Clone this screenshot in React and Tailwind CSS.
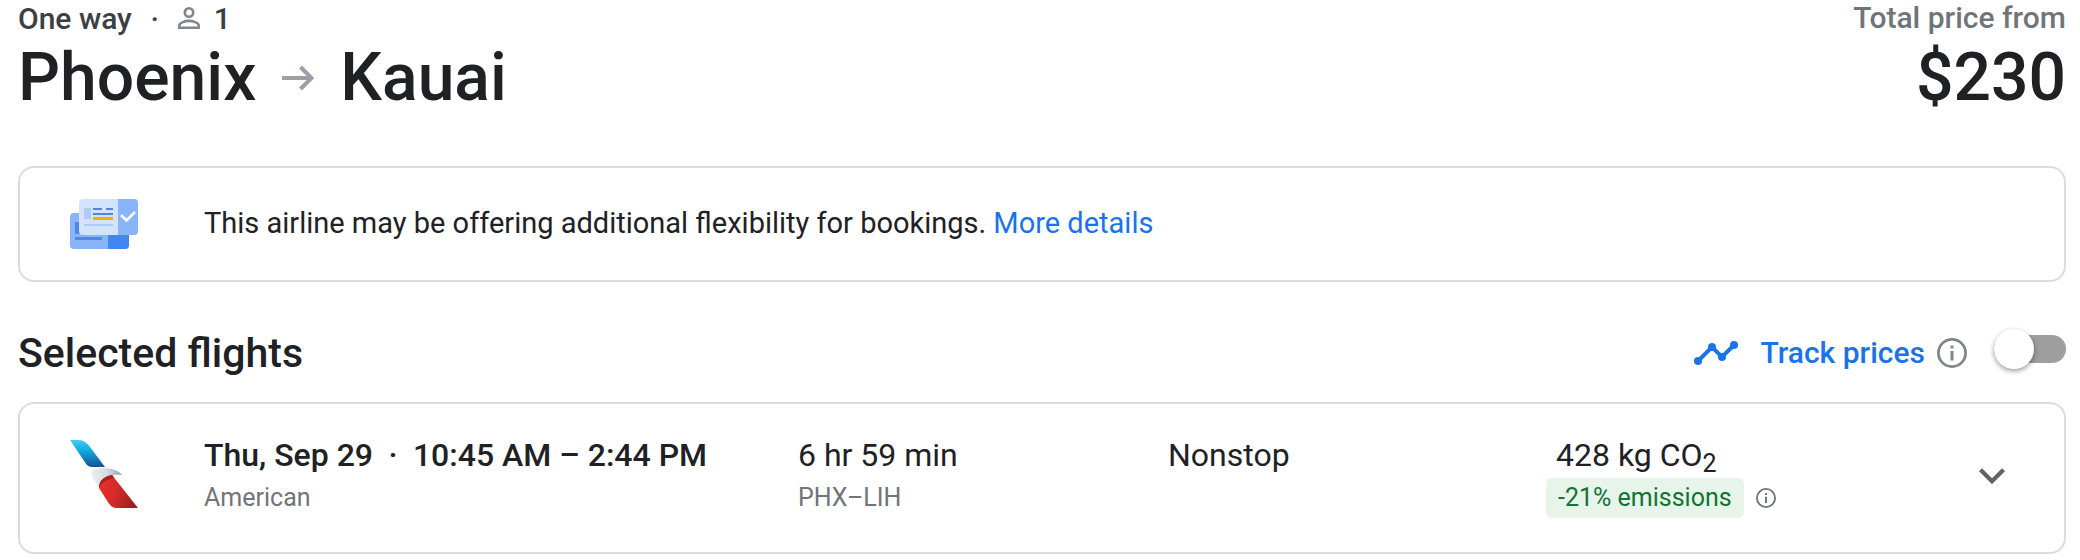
import { useState } from "react";

function PersonIcon() {
  return (
    <svg viewBox="0 0 22 22" aria-hidden="true" className="w-[22px] h-[22px]">
      <g fill="none" stroke="#80868b" strokeWidth="2.6">
        <circle cx="11" cy="5.5" r="4.2" />
        <path d="M1.3 20.7v-2.2c0-2.9 6.2-4.6 9.7-4.6s9.7 1.7 9.7 4.6v2.2z" />
      </g>
    </svg>
  );
}

function ArrowIcon() {
  return (
    <svg viewBox="0 0 32 26" aria-label="to" className="w-8 h-[26px]">
      <path
        d="M0 13h29M18.5 2l11 11-11 11"
        fill="none"
        stroke="#9aa0a6"
        strokeWidth="4"
      />
    </svg>
  );
}

function TicketsIcon() {
  return (
    <svg viewBox="0 0 68 50" aria-hidden="true" className="w-[68px] h-[50px]">
      <rect y="14" width="59" height="36" rx="4" fill="#8ab4f8" />
      <path d="M38 14h17a4 4 0 0 1 4 4v28a4 4 0 0 1-4 4H38z" fill="#4285f4" />
      <path d="M5 23h8v12H5zM5 38h27v3H5z" fill="#4f86ec" />
      <rect x="9" width="59" height="36" rx="4" fill="#d2e3fc" />
      <path d="M48 0h16a4 4 0 0 1 4 4v28a4 4 0 0 1-4 4H48z" fill="#8ab4f8" />
      <path d="M14 9h7v11h-7zM14 25h29v2H14z" fill="#aecbfa" />
      <path d="M23 9h9v2h-9zM36 9h7v2h-7zM23 14h20v2H23z" fill="#4f86ec" />
      <path d="M23 18h20v3H23z" fill="#f9ab00" />
      <path d="M51 16l5.5 5.5L65 13" fill="none" stroke="#fff" strokeWidth="2.6" />
    </svg>
  );
}

function AmericanLogo() {
  return (
    <svg viewBox="0 0 68 68" role="img" aria-label="American Airlines" className="w-[68px] h-[68px]">
      <defs>
        <linearGradient id="aa-blue" x1="0" y1="0" x2="0" y2="1">
          <stop offset="0" stopColor="#4bc9f3" />
          <stop offset="0.35" stopColor="#0fb0e4" />
          <stop offset="1" stopColor="#15518f" />
        </linearGradient>
        <linearGradient id="aa-beak" x1="0" y1="0" x2="1" y2="0">
          <stop offset="0" stopColor="#e8edf2" />
          <stop offset="0.5" stopColor="#d5dde2" />
          <stop offset="1" stopColor="#8fa3ab" />
        </linearGradient>
        <linearGradient id="aa-red" x1="0" y1="0.3" x2="1" y2="0.6">
          <stop offset="0" stopColor="#e8302a" />
          <stop offset="0.45" stopColor="#d52b29" />
          <stop offset="1" stopColor="#96201f" />
        </linearGradient>
      </defs>
      <path d="M0 0h8c5 0 8 2 10.5 5L35 27H22.5c-3.5 0-5.5-1.500-7-4z" fill="url(#aa-blue)" />
      <path
        d="M29 47L23 38c-2-3-2-8 2-9 9-2.300 22-1 27 6-5-.6-9-.4-12 1-7 2-10 6-11 11z"
        fill="url(#aa-beak)"
      />
      <path d="M42 35L68 68H47c-4 0-6.500-2-8.500-5L29 48c0-6 3-11 13-13z" fill="url(#aa-red)" />
      <path d="M42 35l2.500 3.200C36 39.500 31 43 29.200 48.300 28.500 42 33 36.500 42 35z" fill="#ac2023" />
    </svg>
  );
}

function TrendIcon() {
  return (
    <svg viewBox="0 0 44 24" aria-hidden="true" className="w-11 h-6">
      <path d="M4 20L18 6l10 10L40 4" fill="none" stroke="#1a73e8" strokeWidth="4" />
      <g fill="#1a73e8">
        <circle cx="4" cy="20" r="4" />
        <circle cx="18" cy="6" r="4" />
        <circle cx="28" cy="16" r="4" />
        <circle cx="40" cy="4" r="4" />
      </g>
    </svg>
  );
}

function InfoIcon({ className, color }) {
  return (
    <svg viewBox="0 0 30 30" aria-hidden="true" className={className}>
      <circle cx="15" cy="15" r="13.6" fill="none" stroke={color} strokeWidth="2.8" />
      <path d="M13.5 7.5h3v3h-3zM13.5 13h3v9.5h-3z" fill={color} />
    </svg>
  );
}

function TripHeader() {
  return (
    <header className="flex justify-between">
      <div>
        <div className="flex items-center h-9 text-[30px] font-medium text-[#3c4043]">
          <span>One way</span>
          <span className="w-[46px] text-center">·</span>
          <PersonIcon />
          <span className="ml-3.5">1</span>
        </div>
        <h1 className="flex items-center gap-[26px] h-[84px] text-[66px] leading-none font-medium">
          Phoenix <ArrowIcon /> Kauai
        </h1>
      </div>
      <div className="text-right font-medium">
        <p className="h-9 leading-9 text-[30px] text-[#70757a]">Total price from</p>
        <p className="flex items-center justify-end h-[84px] text-[66px] leading-none">$230</p>
      </div>
    </header>
  );
}

function Notice() {
  return (
    <section className="flex items-center h-[116px] mt-[46px] pl-[50px] border-2 border-[#dadce0] rounded-2xl text-[29px]">
      <TicketsIcon />
      <p className="ml-[66px]">
        This airline may be offering additional flexibility for bookings.{" "}
        <a href="#details" className="text-[#1a73e8]">
          More details
        </a>
      </p>
    </section>
  );
}

function TrackPrices() {
  const [tracking, setTracking] = useState(false);

  return (
    <div className="flex items-center">
      <TrendIcon />
      <label htmlFor="track-prices" className="ml-[22px] text-[30px] leading-10 font-medium text-[#1a73e8]">
        Track prices
      </label>
      <button type="button" aria-label="About price tracking" className="ml-3">
        <InfoIcon className="w-[30px] h-[30px]" color="#80868b" />
      </button>
      <span className="relative flex items-center w-[72px] h-10 ml-[27px] mb-2">
        <input
          id="track-prices"
          type="checkbox"
          role="switch"
          checked={tracking}
          onChange={(e) => setTracking(e.target.checked)}
          className="peer appearance-none w-full h-7 rounded-full bg-[#9e9e9e] checked:bg-[#8ab4f8] cursor-pointer"
        />
        <span className="absolute left-0 top-0 w-10 h-10 rounded-full bg-white shadow-[0_2px_5px_rgba(0,0,0,0.4)] pointer-events-none peer-checked:left-8 peer-checked:bg-[#1a73e8]" />
      </span>
    </div>
  );
}

function FlightCard() {
  return (
    <section className="flex items-start h-[152px] mt-5 pt-9 pl-[50px] pr-10 border-2 border-[#dadce0] rounded-2xl">
      <AmericanLogo />
      <div className="grid grid-cols-[594fr_370fr_378fr_414fr] grow ml-[66px] text-[32px] leading-[30px] whitespace-nowrap">
        <div>
          <p className="font-medium">
            Thu, Sep 29 <span className="inline-block w-6 text-center">·</span> 10:45 AM – 2:44 PM
          </p>
          <p className="mt-2 text-[25px] leading-10 text-[#70757a]">American</p>
        </div>
        <div>
          <p>6 hr 59 min</p>
          <p className="mt-2 text-[25px] leading-10 text-[#70757a]">PHX–LIH</p>
        </div>
        <p>Nonstop</p>
        <div>
          <p className="h-[30px] pl-2.5">
            428 kg CO<sub className="text-[25px] leading-none">2</sub>
          </p>
          <div className="flex items-center gap-3 mt-2">
            <span className="h-10 px-3 rounded-md bg-[#e6f4ea] text-[25px] leading-10 text-[#137333]">
              -21% emissions
            </span>
            <button type="button" aria-label="About emissions">
              <InfoIcon className="w-5 h-5" color="#70757a" />
            </button>
          </div>
        </div>
      </div>
      <button type="button" aria-label="Flight details" className="flex justify-center w-16 mt-7">
        <svg viewBox="0 0 26 16" className="w-[26px] h-4">
          <path d="M1.5 1.8L13 13.2 24.5 1.8" fill="none" stroke="#5f6368" strokeWidth="4.2" />
        </svg>
      </button>
    </section>
  );
}

export default function App() {
  return (
    <main className="pl-[18px] pr-3.5 font-['Roboto',sans-serif] text-[#202124] bg-white">
      <TripHeader />
      <Notice />
      <div className="flex items-center justify-between mt-[42px]">
        <h2 className="text-[41px] leading-[58px] font-medium">Selected flights</h2>
        <TrackPrices />
      </div>
      <FlightCard />
    </main>
  );
}
